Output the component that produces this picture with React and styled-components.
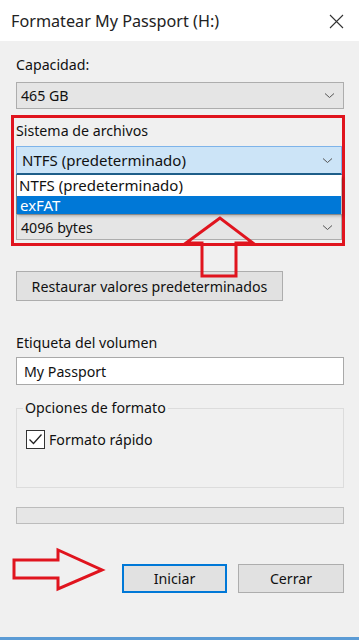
import styled, { createGlobalStyle } from "styled-components";

const GlobalStyle = createGlobalStyle`
  html, body {
    margin: 0;
    padding: 0;
    background: #f0f0f0;
  }
  * {
    box-sizing: border-box;
  }
`;

const Window = styled.div`
  position: relative;
  width: 359px;
  height: 640px;
  display: flex;
  flex-direction: column;
  background: #f0f0f0;
  font-family: "Noto Sans", "Open Sans", sans-serif;
  font-size: 14.2px;
  color: #111;
  border-bottom: 3px solid #5b9bd5;
`;

const TitleBar = styled.div`
  height: 41px;
  flex: none;
  display: flex;
  align-items: center;
  justify-content: space-between;
  padding: 1px 15px 0 11px;
  background: #fff;
`;

const Title = styled.div`
  font-size: 16.2px;
  color: #222;
`;

const Body = styled.div`
  flex: 1;
  display: flex;
  flex-direction: column;
  padding: 0 15px 0 16px;
`;

const Label = styled.div`
  line-height: 20px;
  margin-top: ${(p) => p.$top || 0}px;
`;

const Select = styled.div`
  height: ${(p) => p.$h || 27}px;
  margin-top: ${(p) => p.$top || 0}px;
  display: flex;
  align-items: center;
  justify-content: space-between;
  padding: 0 8px 0 ${(p) => (p.$focus ? 5 : 4)}px;
  background: ${(p) => (p.$focus ? "#cce4f7" : "#e5e5e5")};
  border: 1px solid ${(p) => (p.$focus ? "#7eb4ea" : "#adadad")};
  border-bottom-color: ${(p) => (p.$focus ? "#1e5f8a" : "#adadad")};
  border-bottom-width: ${(p) => (p.$focus ? 2 : 1)}px;
  font-size: ${(p) => (p.$focus ? 15 : 14.2)}px;
`;

const RedBox = styled.div`
  margin: 6px -1px 0 -5px;
  padding: 3px 0 3px 2px;
  border: 3px solid #e0141e;
  display: flex;
  flex-direction: column;
`;

const DropList = styled.div`
  background: #fff;
  border-left: 1px solid #7a7a7a;
  margin-right: 1px;
  box-shadow: 2px 2px 3px rgba(0, 0, 0, 0.25);
  position: relative;
  z-index: 1;
`;

const Option = styled.div`
  height: ${(p) => p.$h}px;
  line-height: ${(p) => p.$h}px;
  padding-left: ${(p) => (p.$selected ? 3 : 2)}px;
  font-size: 15px;
  background: ${(p) => (p.$selected ? "#0078d7" : "transparent")};
  color: ${(p) => (p.$selected ? "#fff" : "#111")};
`;

const Button = styled.div`
  height: ${(p) => p.$h || 29}px;
  width: ${(p) => p.$w}px;
  margin-top: ${(p) => p.$top || 0}px;
  display: flex;
  align-items: center;
  justify-content: center;
  background: #e1e1e1;
  border: ${(p) => (p.$default ? "2px solid #0078d7" : "1px solid #adadad")};
`;

const TextInput = styled.div`
  height: 28px;
  margin-top: 4px;
  display: flex;
  align-items: center;
  padding-left: 7px;
  background: #fff;
  border: 1px solid #a9a9a9;
`;

const GroupBox = styled.fieldset`
  margin: 13px 0 0;
  padding: 0 0 38px 9px;
  border: 1px solid #dcdcdc;
  min-width: 0;
`;

const Legend = styled.legend`
  padding: 0 2px;
  margin-left: -3px;
  line-height: 20px;
`;

const CheckRow = styled.div`
  margin-top: 12px;
  display: flex;
  align-items: center;
  gap: 4px;
`;

const CheckBox = styled.div`
  width: 19px;
  height: 19px;
  border: 1px solid #333;
  background: #fff;
  display: flex;
  align-items: center;
  justify-content: center;
`;

const Progress = styled.div`
  height: 17px;
  margin-top: 19px;
  background: #e6e6e6;
  border: 1px solid #bcbcbc;
`;

const ButtonRow = styled.div`
  margin-top: 40px;
  display: flex;
  justify-content: flex-end;
  gap: 11px;
`;

const Annotation = styled.svg`
  position: absolute;
  left: 0;
  top: 0;
  pointer-events: none;
  z-index: 2;
`;

function Chevron() {
  return (
    <svg width="11" height="7" viewBox="0 0 11 7">
      <path d="M1 1.5 L5.5 5.5 L10 1.5" fill="none" stroke="#555" strokeWidth="1" />
    </svg>
  );
}

export default function App() {
  return (
    <>
      <GlobalStyle />
      <Window>
        <TitleBar>
          <Title>Formatear My Passport (H:)</Title>
          <svg width="15" height="15" viewBox="0 0 15 15">
            <path d="M1 1 L14 14 M14 1 L1 14" stroke="#333" strokeWidth="1.1" />
          </svg>
        </TitleBar>
        <Body>
          <Label $top={14}>Capacidad:</Label>
          <Select $top={7}>
            465 GB
            <Chevron />
          </Select>
          <RedBox>
            <Label>Sistema de archivos</Label>
            <Select $focus $top={5} $h={29}>
              NTFS (predeterminado)
              <Chevron />
            </Select>
            <DropList>
              <Option $h={21}>NTFS (predeterminado)</Option>
              <Option $h={18} $selected>exFAT</Option>
            </DropList>
            <Select $h={26}>
              4096 bytes
              <Chevron />
            </Select>
          </RedBox>
          <Button $w={267} $h={30} $top={25}>
            Restaurar valores predeterminados
          </Button>
          <Label $top={32}>Etiqueta del volumen</Label>
          <TextInput>My Passport</TextInput>
          <GroupBox>
            <Legend>Opciones de formato</Legend>
            <CheckRow>
              <CheckBox>
                <svg width="15" height="13" viewBox="0 0 15 13">
                  <path d="M1.5 6.5 L5.5 10.5 L13.5 1.5" fill="none" stroke="#222" strokeWidth="1.3" />
                </svg>
              </CheckBox>
              Formato rápido
            </CheckRow>
          </GroupBox>
          <Progress />
          <ButtonRow>
            <Button $w={105} $default>Iniciar</Button>
            <Button $w={106}>Cerrar</Button>
          </ButtonRow>
        </Body>
        <Annotation width="359" height="640" viewBox="0 0 359 640">
          <path
            d="M220 218 L186 243 L202 243 L202 276 L236 276 L236 243 L253 243 Z"
            fill="none"
            stroke="#e0141e"
            strokeWidth="3"
            strokeLinejoin="miter"
          />
          <path
            d="M14 560 L58 560 L58 550 L102 570 L58 589 L58 578 L14 578 Z"
            fill="none"
            stroke="#e0141e"
            strokeWidth="3"
          />
        </Annotation>
      </Window>
    </>
  );
}
